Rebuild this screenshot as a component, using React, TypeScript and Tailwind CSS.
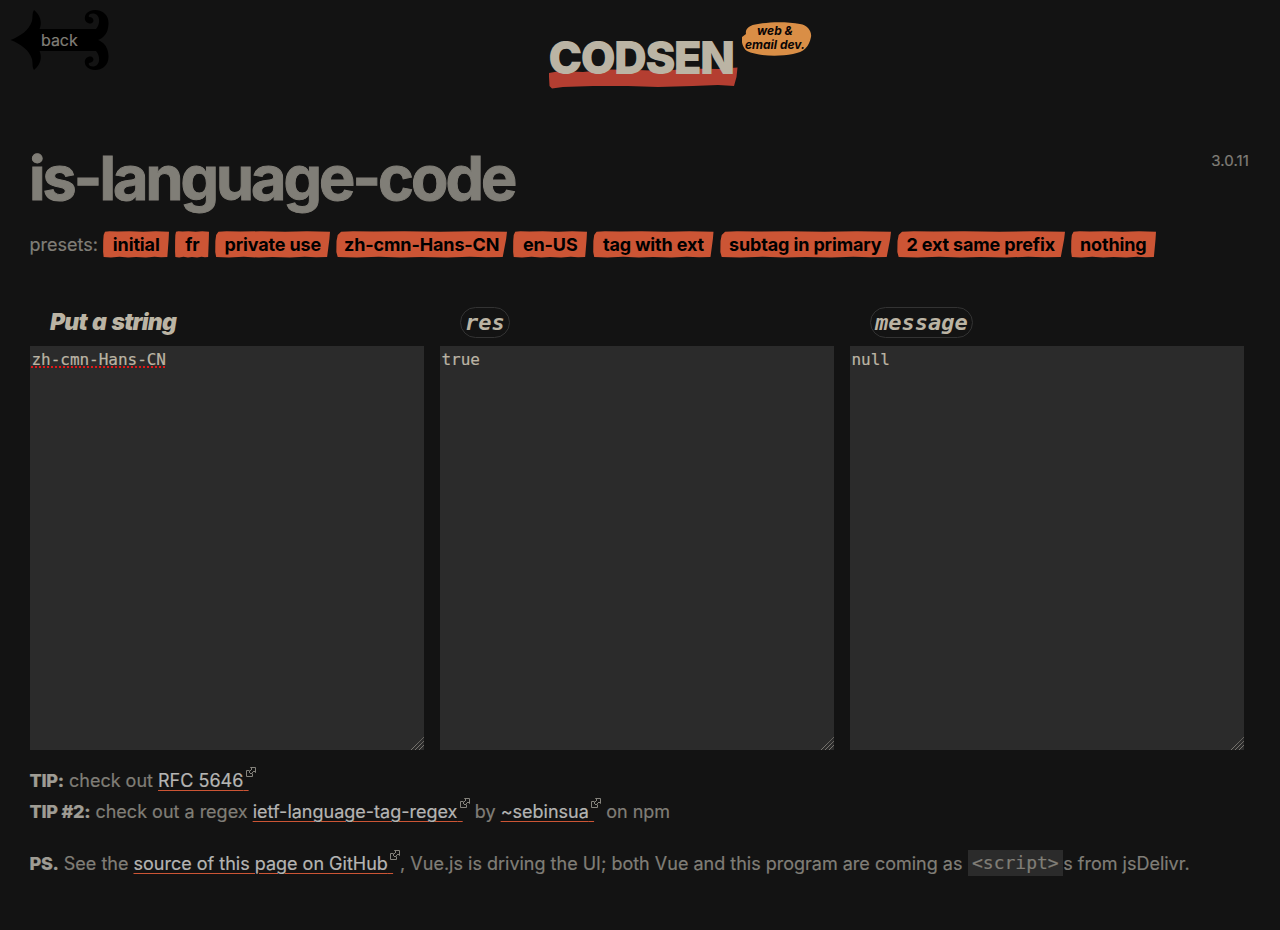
import type { ReactNode } from "react";

const presets = [
  { label: "initial", box: "w-[66px]" },
  { label: "fr", box: "w-[34px]" },
  { label: "private use", box: "w-[115px]" },
  { label: "zh-cmn-Hans-CN", box: "w-[171px]" },
  { label: "en-US", box: "w-[74px]" },
  { label: "tag with ext", box: "w-[120.5px]" },
  { label: "subtag in primary", box: "w-[171px]" },
  { label: "2 ext same prefix", box: "w-[168px]" },
  { label: "nothing", box: "w-[85px]" },
];

function Preset({ label, box }: { label: string; box: string }) {
  return (
    <button className={`relative h-[27px] shrink-0 ${box}`}>
      <svg className="absolute inset-0 h-full w-full" viewBox="0 0 100 27" preserveAspectRatio="none" fill="#cc5535">
        <path d="M3 .8 10 .2 22 .6 40 .3 61 .7 80 .2 100 .8 99.5 8 98.5 17 97.5 26 88 26.2 78 25.8 65 26.5 50 26 38 26.6 25 25.8 12 26.5 1 26 .2 21 .3 10 1 4Z" />
      </svg>
      <span className="relative block pl-[0.5px] text-center text-[18px] leading-[27px] font-bold tracking-[-0.14px] whitespace-nowrap text-black">{label}</span>
    </button>
  );
}

function Grip() {
  return (
    <svg className="absolute right-0 bottom-0 h-[14px] w-[14px]" viewBox="0 0 14 14" stroke="#96928a" strokeWidth="1" strokeDasharray="1 .5">
      <path d="M1 14 14 1M5 14 14 5M9 14 14 9" />
    </svg>
  );
}

function Panel({ title, children }: { title: ReactNode; children: ReactNode }) {
  return (
    <section className="w-[394px]">
      <h2 className="flex h-[39px] items-start pl-5 text-[22px] leading-[31px] text-[#bbb4a4]">{title}</h2>
      <div className="relative h-[404px] bg-[#2b2b2b] px-[1.5px] pt-[4px] font-['DejaVu_Sans_Mono',monospace] text-[16px] leading-[20px] tracking-[-0.03px] text-[#bbb4a4] [-webkit-text-stroke:0.2px_#bbb4a4]">
        {children}
        <Grip />
      </div>
    </section>
  );
}

function Code({ children }: { children: ReactNode }) {
  return (
    <code className="rounded-[16px] border border-[#333] px-[4px] font-['DejaVu_Sans_Mono',monospace] text-[22px] leading-[29px] font-bold italic">{children}</code>
  );
}

function ExtLink({ children }: { children: ReactNode }) {
  return (
    <a className="relative mr-[7px] text-[#b5b5b3]">
      <span className="underline decoration-[#cc5535] decoration-1 underline-offset-[3px]">
        {children}
        <span className="tracking-[1px]">{"\u200a\u200a"}</span>
      </span>
      <svg className="absolute -right-[7px] top-[-3px] h-[10px] w-[10px]" viewBox="0 0 10 10" fill="none" stroke="#85837c" strokeWidth="1">
        <path d="M3.5 3.5h-3v6h6v-3M4.5.5h5v5L8 4 5 7 3 5l3-3Z" />
      </svg>
    </a>
  );
}

export default function App() {
  return (
    <main className="h-[930px] w-[1280px] overflow-hidden bg-[#131313] font-['Inter',sans-serif] text-[18px] text-[#807e77]">
      <header className="flex h-[150px]">
        <a className="relative mt-[10px] ml-[10px] h-[60px] w-[100px]">
          <svg className="absolute inset-0" width="100" height="60" viewBox="0 0 100 60" fill="#000">
            <path d="M.5 30C11 26 19 20 22 11 23 6 22 3 24 0 29 4 33 11 29.5 19H86C90 15 91 5 84 3.5 80 3 78 5 79 7 84 7 85 12 81 13.5 76 14 73 9 76 4 80-1 89-1 94 3 99 7 99 13 98 18 97 24 93 28 88 30 93 32 97 36 98 42 99 47 99 53 94 57 89 61 80 61 76 56 73 51 76 46 81 46.5 85 48 84 53 79 53 78 55 80 57 84 56.5 91 55 90 45 86 41H29.5C33 49 29 56 24 60 22 57 23 54 22 49 19 40 11 34 .5 30Z" />
          </svg>
          <span className="relative ml-[31px] block text-[16px] leading-[60px] tracking-[-0.05px] [-webkit-text-stroke:0.2px_#807e77]">back</span>
        </a>
        <div className="relative mt-[33px] ml-[438px] h-[58px] w-[194px]">
          <svg className="absolute top-[34px] left-0" width="192" height="24" viewBox="0 0 192 24" fill="#b43e31">
            <path d="M1 6 12 4 35 5 60 2.5 90 3 115 4 140 1.5 170 2 189.5 .5 188.5 10 186 19 170 18 145 19 110 20 80 19 45 19 15 20 4 21.5 1.5 19 1 10Z" />
          </svg>
          <span className="relative block pl-[0.5px] text-[45px] leading-[49px] font-black tracking-[-1.35px] whitespace-nowrap text-[#bbb4a4]">CODSEN</span>
        </div>
        <div className="relative mt-[22px] h-[34px] w-[70px]">
          <svg className="absolute inset-0" width="70" height="34" viewBox="0 0 70 34" fill="#d98e46">
            <path d="M4 12C3 7 7 3 16 2 29-.5 46-.3 58 2 66 3 70 10 69 15 67 25 62 30 51 32 36 35 15 34 5 29 1 26-1 20 0 15Z" />
          </svg>
          <span className="relative block pt-[2px] pr-[4px] text-center text-[12px] leading-[14px] font-bold whitespace-nowrap text-[#090505] italic">web &amp;<br />email dev.</span>
        </div>
      </header>

      <div className="flex h-[81px] justify-between pr-[31px] pl-[29px]">
        <h1 className="text-[61px] leading-[57px] font-bold tracking-[-2.95px] [-webkit-text-stroke:1px_#807e77]">is-language-code</h1>
        <span className="text-[15px] leading-[22px] tracking-[0.1px] [-webkit-text-stroke:0.2px_#807e77]">3.0.11</span>
      </div>

      <div className="flex h-[76px] items-start gap-[6px] pl-[29px]">
        <span className="w-[68px] pl-[0.5px] leading-[27px] whitespace-nowrap [-webkit-text-stroke:0.2px_#807e77]">presets:</span>
        {presets.map((p) => <Preset key={p.label} {...p} />)}
      </div>

      <div className="flex h-[443px] gap-4 pl-[30px]">
        <Panel title={<span className="text-[23px] font-black tracking-[-0.8px] [word-spacing:1.5px] italic">Put a string</span>}>
          <span className="underline decoration-[#e01818] decoration-dotted decoration-2 underline-offset-[1px] [text-decoration-skip-ink:none]">zh-cmn-Hans-CN</span>
        </Panel>
        <Panel title={<Code>res</Code>}>true</Panel>
        <Panel title={<Code>message</Code>}>null</Panel>
      </div>

      <div className="pt-[15px] pl-[29.5px] leading-[31px] whitespace-nowrap [-webkit-text-stroke:0.2px] [&_b]:font-extrabold [&_b]:tracking-[-0.25px] [&_b]:text-[#9f9c94]">
        <p><b>TIP:</b> check out <ExtLink>RFC 5646</ExtLink></p>
        <p><b>TIP #2:</b> check out a regex <ExtLink>ietf-language-tag-regex</ExtLink> by <ExtLink>~sebinsua</ExtLink> on npm</p>
        <p className="mt-[21px]"><b>PS.</b> See the <ExtLink>source of this page on GitHub</ExtLink>, Vue.js is driving the UI; both Vue and this program are coming as <code className="inline-block h-[26px] bg-[#2b2b2b] px-[4.5px] align-[1px] font-['DejaVu_Sans_Mono',monospace] text-[18px] leading-[25px]">&lt;script&gt;</code>s from jsDelivr.</p>
      </div>
    </main>
  );
}
